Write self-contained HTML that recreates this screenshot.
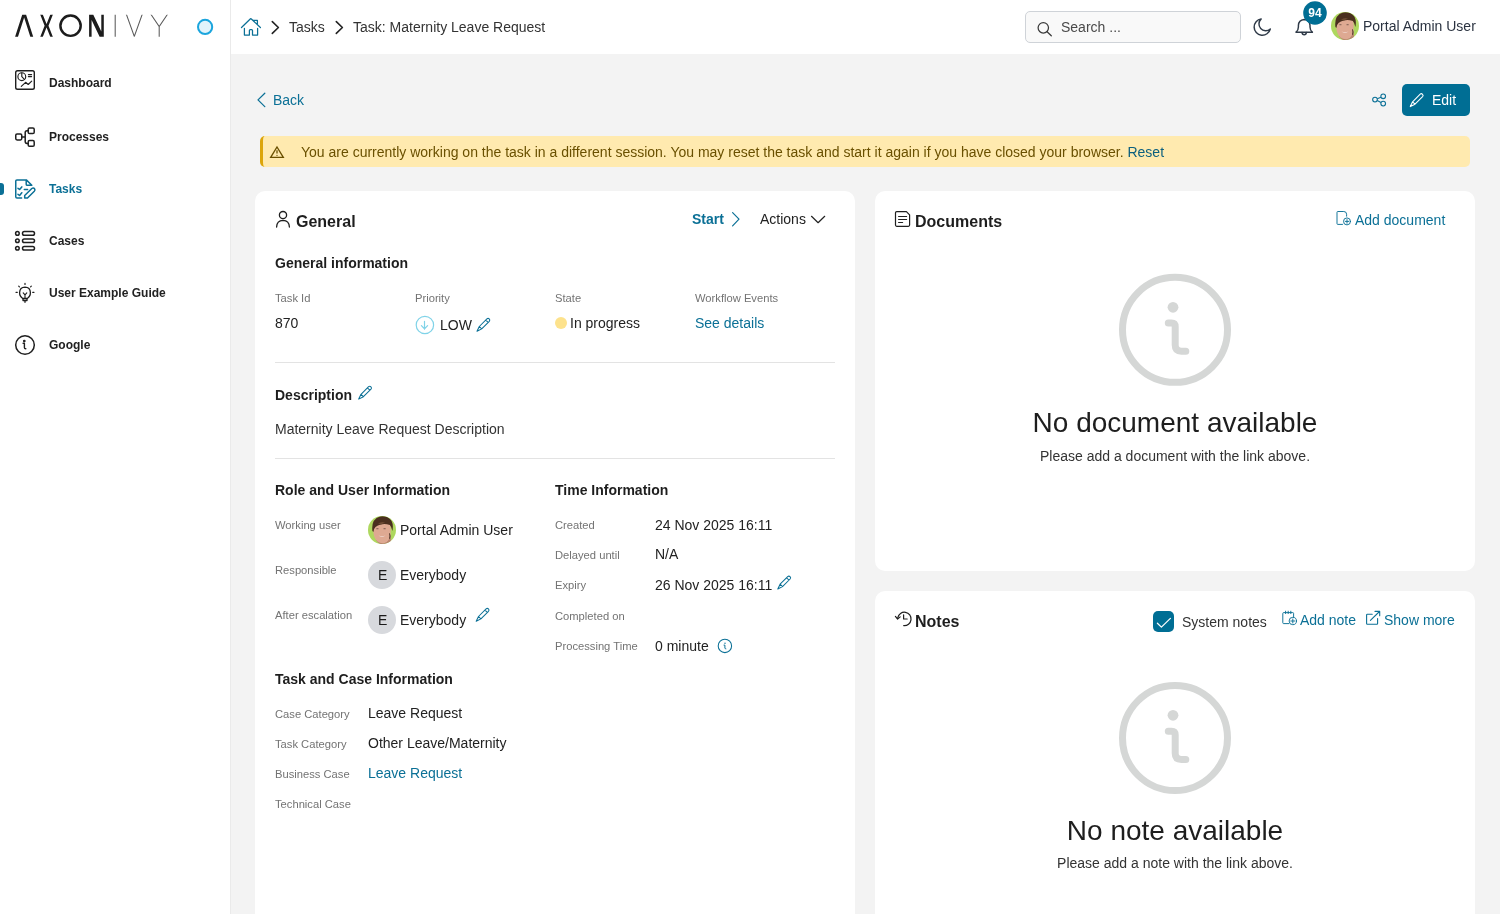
<!DOCTYPE html>
<html><head><meta charset="utf-8">
<style>
*{box-sizing:border-box;margin:0;padding:0}
html,body{width:1500px;height:914px;overflow:hidden;background:#f3f3f3;font-family:"Liberation Sans",sans-serif;color:#222}
.a{position:absolute;white-space:nowrap;line-height:1;will-change:transform}
svg{position:absolute;overflow:visible}
#side{position:absolute;left:0;top:0;width:231px;height:914px;background:#fff;border-right:1px solid #eaeaea}
#top{position:absolute;left:231px;top:0;width:1269px;height:54px;background:#fff}
.nav{font-size:12px;font-weight:bold;color:#222;left:49px}
.t14{font-size:14px}
.b14{font-size:14px;font-weight:bold}
.lbl{font-size:11.2px;color:#737373}
.teal{color:#0b7096}
.card{position:absolute;background:#fff;border-radius:10px}
.hr{position:absolute;height:1px;background:#e3e3e3}
</style></head><body>
<div id="side"></div>
<div id="top"></div>

<!-- logo -->
<svg width="240" height="54" style="left:0;top:0" viewBox="0 0 240 54">
  <clipPath id="lc"><rect x="0" y="14.7" width="240" height="22.1"/></clipPath>
  <g fill="none" stroke="#1c1c1c" stroke-width="2.3" stroke-linejoin="miter" stroke-miterlimit="10" clip-path="url(#lc)">
    
    <path d="M40.5 12 L45.9 25.75 L40.5 39.5 M52.6 12 L47.2 25.75 L52.6 39.5" stroke-linejoin="round" stroke-width="2.4"/>
    
    
  </g>
  <polygon fill="#1c1c1c" points="15.1,36.8 22.2,14.7 26.1,14.7 33.2,36.8 30.3,36.8 24.15,17.6 18,36.8"/>
  <polygon fill="#1c1c1c" points="89.1,14.7 93.3,14.7 101.3,31.4 101.3,14.7 103.8,14.7 103.8,36.8 99.6,36.8 91.6,20.1 91.6,36.8 89.1,36.8"/>
  <g fill="none" stroke="#5a5a5a" stroke-width="1.05" clip-path="url(#lc)">
    <path d="M115.2 14 V37"/>
    <path d="M125.9 13 L134.3 36.4 L142.7 13"/>
    <path d="M150.7 14 L159.2 26.6 L167.7 14 M159.2 26.6 V37"/>
  </g>
  <ellipse cx="70.55" cy="25.7" rx="10.15" ry="10.15" fill="none" stroke="#1c1c1c" stroke-width="2.45"/>
  <circle cx="205.1" cy="26.9" r="7.1" fill="#e3f4fb" stroke="#1ba5dd" stroke-width="2"/>
</svg>

<!-- sidebar nav -->
<div class="a nav" style="top:76.5px">Dashboard</div>
<div class="a nav" style="top:130.6px">Processes</div>
<div class="a nav" style="top:182.8px;color:#0b7096">Tasks</div>
<div class="a nav" style="top:234.8px">Cases</div>
<div class="a nav" style="top:286.9px">User Example Guide</div>
<div class="a nav" style="top:338.6px">Google</div>
<div style="position:absolute;left:0;top:183px;width:4px;height:12px;background:#0b7096;border-radius:0 3px 3px 0"></div>

<!-- breadcrumb -->
<div class="a t14" style="left:288.6px;top:20.2px;color:#333">Tasks</div>
<div class="a t14" style="left:352.5px;top:20.2px;color:#333">Task: Maternity Leave Request</div>

<!-- search -->
<div style="position:absolute;left:1025px;top:11px;width:216px;height:32px;border:1px solid #cfd3d8;border-radius:5px;background:#f9f9f9"></div>
<div class="a t14" style="left:1060.7px;top:19.7px;color:#4a4a4a">Search ...</div>
<div class="a t14" style="left:1363.2px;top:19.2px;color:#2b3341">Portal Admin User</div>

<!-- back / edit -->
<div class="a t14 teal" style="left:272.5px;top:93.2px">Back</div>
<div style="position:absolute;left:1402px;top:84px;width:68px;height:32px;background:#006e94;border-radius:5px"></div>
<div class="a t14" style="left:1431.5px;top:93.4px;color:#fff">Edit</div>

<!-- alert -->
<div style="position:absolute;left:260px;top:136px;width:1210px;height:31px;background:#ffeaaf;border-left:3px solid #dca50a;border-radius:5px"></div>
<div class="a t14" style="left:300.8px;top:145.2px;color:#6a5000">You are currently working on the task in a different session. You may reset the task and start it again if you have closed your browser. <span style="color:#0b5f7e">Reset</span></div>

<!-- cards -->
<div class="card" style="left:255px;top:191px;width:600px;height:760px"></div>
<div class="card" style="left:875px;top:191px;width:600px;height:380px"></div>
<div class="card" style="left:875px;top:591px;width:600px;height:400px"></div>



<!-- GENERAL CARD CONTENT -->
<div class="a" style="left:296px;top:213.5px;font-size:16px;font-weight:bold;color:#1e1e1e">General</div>
<div class="a b14 teal" style="left:691.8px;top:212px">Start</div>
<div class="a t14" style="left:760px;top:212px;color:#222">Actions</div>
<div class="a b14" style="left:275px;top:256.3px;color:#1e1e1e">General information</div>
<div class="a lbl" style="left:275px;top:292.9px">Task Id</div>
<div class="a lbl" style="left:415px;top:292.9px">Priority</div>
<div class="a lbl" style="left:555px;top:292.9px">State</div>
<div class="a lbl" style="left:695px;top:292.9px">Workflow Events</div>
<div class="a t14" style="left:275px;top:316.2px;color:#222">870</div>
<div class="a t14" style="left:439.5px;top:318.2px;color:#222">LOW</div>
<div style="position:absolute;left:555px;top:317px;width:12px;height:12px;border-radius:50%;background:#fde28c"></div>
<div class="a t14" style="left:569.6px;top:316.2px;color:#222">In progress</div>
<div class="a t14 teal" style="left:695px;top:316.2px">See details</div>
<div class="hr" style="left:275px;top:362px;width:560px"></div>
<div class="a b14" style="left:275px;top:387.9px;color:#1e1e1e">Description</div>
<div class="a t14" style="left:275px;top:422.4px;color:#333">Maternity Leave Request Description</div>
<div class="hr" style="left:275px;top:458px;width:560px"></div>

<div class="a b14" style="left:275px;top:483.2px;color:#1e1e1e">Role and User Information</div>
<div class="a lbl" style="left:275px;top:520px">Working user</div>
<div class="a lbl" style="left:275px;top:565px">Responsible</div>
<div class="a lbl" style="left:275px;top:610px">After escalation</div>
<div class="a t14" style="left:400.4px;top:523.3px;color:#222">Portal Admin User</div>
<div class="a t14" style="left:400.4px;top:568.3px;color:#222">Everybody</div>
<div class="a t14" style="left:400.4px;top:613.3px;color:#222">Everybody</div>
<div style="position:absolute;left:368px;top:561px;width:28px;height:28px;border-radius:50%;background:#d7d9dd"></div>
<div style="position:absolute;left:368px;top:606px;width:28px;height:28px;border-radius:50%;background:#d7d9dd"></div>
<div class="a t14" style="left:378px;top:567.5px;color:#1a1a1a">E</div>
<div class="a t14" style="left:378px;top:612.5px;color:#1a1a1a">E</div>

<div class="a b14" style="left:555px;top:483.4px;color:#1e1e1e">Time Information</div>
<div class="a lbl" style="left:555px;top:520px">Created</div>
<div class="a lbl" style="left:555px;top:550px">Delayed until</div>
<div class="a lbl" style="left:555px;top:580.3px">Expiry</div>
<div class="a lbl" style="left:555px;top:610.7px">Completed on</div>
<div class="a lbl" style="left:555px;top:641px">Processing Time</div>
<div class="a t14" style="left:655px;top:517.5px;color:#222">24 Nov 2025 16:11</div>
<div class="a t14" style="left:655px;top:547.4px;color:#222">N/A</div>
<div class="a t14" style="left:655px;top:577.8px;color:#222">26 Nov 2025 16:11</div>
<div class="a t14" style="left:655px;top:638.5px;color:#222">0 minute</div>

<div class="a b14" style="left:275px;top:672.4px;color:#1e1e1e">Task and Case Information</div>
<div class="a lbl" style="left:275px;top:709px">Case Category</div>
<div class="a lbl" style="left:275px;top:739px">Task Category</div>
<div class="a lbl" style="left:275px;top:769px">Business Case</div>
<div class="a lbl" style="left:275px;top:799px">Technical Case</div>
<div class="a t14" style="left:368px;top:706.2px;color:#222">Leave Request</div>
<div class="a t14" style="left:368px;top:736.2px;color:#222">Other Leave/Maternity</div>
<div class="a t14 teal" style="left:368px;top:766.2px">Leave Request</div>

<!-- DOCUMENTS -->
<div class="a" style="left:915.2px;top:213.9px;font-size:16px;font-weight:bold;color:#1e1e1e">Documents</div>
<div class="a t14 teal" style="left:1355px;top:212.9px">Add document</div>
<div class="a" style="left:1175px;top:409.3px;font-size:28px;color:#1e1e1e;transform:translateX(-50%)">No document available</div>
<div class="a t14" style="left:1175px;top:448.7px;color:#333;transform:translateX(-50%)">Please add a document with the link above.</div>

<!-- NOTES -->
<div class="a" style="left:915.2px;top:614.1px;font-size:16px;font-weight:bold;color:#1e1e1e">Notes</div>
<div style="position:absolute;left:1153px;top:611px;width:21px;height:21px;border-radius:5px;background:#006e94"></div>
<div class="a t14" style="left:1182.3px;top:615.3px;color:#333">System notes</div>
<div class="a t14 teal" style="left:1300.2px;top:612.5px">Add note</div>
<div class="a t14 teal" style="left:1384.2px;top:612.5px">Show more</div>
<div class="a" style="left:1175px;top:817.3px;font-size:28px;color:#1e1e1e;transform:translateX(-50%)">No note available</div>
<div class="a t14" style="left:1175px;top:856.2px;color:#333;transform:translateX(-50%)">Please add a note with the link above.</div>

<!-- ICONS OVERLAY -->
<svg width="1500" height="914" style="left:0;top:0;z-index:5" viewBox="0 0 1500 914">
 <g fill="none" stroke="#1f1f1f" stroke-width="1.5" stroke-linecap="round" stroke-linejoin="round">
  <!-- dashboard -->
  <rect x="15.7" y="70.7" width="18.6" height="18.6" rx="1.8" stroke-width="1.4"/>
  <circle cx="21.8" cy="76.7" r="3.9" stroke-width="1.15"/>
  <path d="M21.8 73 V76.7 L24.4 79.3" stroke-width="1.15"/>
  <path d="M28.4 74.6 H31.6 M28.4 76.6 H31.6" stroke-width="1.15"/>
  <path d="M21.3 86.4 L25.6 82.3 L28.2 84.5 L31.7 81.1" stroke-width="1.15"/>
  <!-- processes -->
  <rect x="15.75" y="133.9" width="6" height="6" rx="1.3"/>
  <rect x="28.2" y="128" width="6" height="5.6" rx="1.3"/>
  <rect x="28.2" y="140.6" width="6" height="5.6" rx="1.3"/>
  <path d="M21.8 136.9 H25.2 M28.2 130.8 H27 Q25.2 130.8 25.2 132.6 V141.6 Q25.2 143.4 27 143.4 H28.2"/>
  <!-- cases -->
  <circle cx="17.4" cy="233.4" r="1.8"/><circle cx="17.4" cy="240.8" r="1.8"/><circle cx="17.4" cy="248.3" r="1.8"/>
  <rect x="22.5" y="231.6" width="12" height="3.6" rx="1.8"/>
  <rect x="22.5" y="239" width="12" height="3.6" rx="1.8"/>
  <rect x="22.5" y="246.5" width="12" height="3.6" rx="1.8"/>
  <!-- bulb -->
  <path d="M22.8 298.5 Q19.5 296.5 19.6 292.6 Q19.8 287.3 25 287.2 Q30.2 287.3 30.4 292.6 Q30.5 296.5 27.2 298.5 Z" stroke-width="1.3"/>
  <path d="M23 298.6 V300.5 H27 V298.6 M25 300.5 V302.3" stroke-width="1.3"/>
  <path d="M23.2 292.8 L25 294.8 L26.8 292.8 M25 294.8 V298" stroke-width="1.1"/>
  <path d="M25 283.3 V284.5 M16 292.3 H17.3 M32.7 292.3 H34 M18.7 286.1 L19.4 286.8 M31.3 286.1 L30.6 286.8" stroke-width="1.2"/>
  <!-- google info -->
  <circle cx="25" cy="345" r="9.3"/>
  <circle cx="24.3" cy="341" r="0.6" fill="#1f1f1f"/>
  <path d="M23.1 343.3 H24.4 V347.6 Q24.4 348.8 25.8 348.8" stroke-width="1.4"/>
 </g>
 <!-- tasks (teal) -->
 <g fill="none" stroke="#0b7096" stroke-width="1.5" stroke-linecap="round" stroke-linejoin="round">
  <path d="M21.6 198.1 H17 Q15.75 198.1 15.75 196.8 V180.9 Q15.75 179.9 16.9 179.9 H26.3 L31.8 185.3 H27.3 Q26.2 185.3 26.2 184.2 V180.2"/>
  <path d="M18 188.3 L19.6 189.5 L21.8 186.9 M18 194.3 L19.6 195.5 L21.8 192.7 M24.3 189.4 H27.6"/>
  <path d="M24.7 198 V195.5 L31.8 188.5 Q33.3 187.4 34.5 188.6 Q35.5 190 34.3 191.3 L27.5 198 Z"/>
 </g>
 <!-- breadcrumb -->
 <g fill="none" stroke="#0b7096" stroke-width="1.25" stroke-linecap="round" stroke-linejoin="round">
  <path d="M241.5 27.5 L250.5 18.8 Q250.8 18.5 251.1 18.8 L260.4 27.5 M253.3 20.3 H257.4 V24"/>
  <path d="M244.4 28.3 V35 H249.4 V30.5 Q249.4 29.6 250.3 29.6 H251.6 Q252.5 29.6 252.5 30.5 V35 H257.6 V28.3"/>
 </g>
 <g fill="none" stroke="#222" stroke-width="1.6" stroke-linecap="round" stroke-linejoin="round">
  <path d="M272.3 21.6 L278.4 27.5 L272.3 33.4"/>
  <path d="M336.3 21.6 L342.4 27.5 L336.3 33.4"/>
 </g>
 <!-- search -->
 <g fill="none" stroke="#3a3a3a" stroke-width="1.25" stroke-linecap="round">
  <circle cx="1043.3" cy="27.8" r="5.2"/>
  <path d="M1047.1 31.7 L1051.3 35.8"/>
 </g>
 <!-- moon -->
 <path d="M1261.2 18.9 A8.2 8.2 0 1 0 1270.3 29 A6.6 6.6 0 0 1 1261.2 18.9 Z" fill="none" stroke="#2f3a48" stroke-width="1.45" stroke-linejoin="round"/>
 <!-- bell -->
 <g fill="none" stroke="#2f3a48" stroke-width="1.45" stroke-linecap="round" stroke-linejoin="round">
  <path d="M1296 32.2 Q1298.4 30.4 1298.4 27 V25.5 Q1298.6 20 1304.2 19.5 Q1309.8 20 1310 25.5 V27 Q1310 30.4 1312.4 32.2 Z"/>
  <path d="M1302 32.4 Q1302.2 34.8 1304.2 34.8 Q1306.2 34.8 1306.4 32.4"/>
 </g>
 <circle cx="1315" cy="13" r="11.8" fill="#006e94"/>
 <!-- back chevron -->
 <path d="M264.8 93.2 L258 99.9 L264.8 106.6" fill="none" stroke="#0b7096" stroke-width="1.3" stroke-linecap="round" stroke-linejoin="round"/>
 <!-- share -->
 <g fill="none" stroke="#0b7096" stroke-width="1.1">
  <circle cx="1375" cy="99.6" r="2.35"/><circle cx="1383.2" cy="96.3" r="2.35"/><circle cx="1383.2" cy="103.6" r="2.35"/>
  <path d="M1377.2 98.7 L1381 97.2 M1377.2 100.6 L1381 102.6"/>
 </g>
 <!-- edit pencil white -->
 <g fill="none" stroke="#fff" stroke-width="1.1" stroke-linejoin="round">
  <path transform="translate(1409.8 93.3)" d="M0.5 13.3 L2.8 8.5 L10.4 0.9 A1.7 1.7 0 0 1 12.8 3.3 L5.2 10.9 Z M2.8 8.5 L5.2 10.9"/>
 </g>
 <!-- warning -->
 <g fill="none" stroke="#6a5000" stroke-width="1.35" stroke-linejoin="miter">
  <path d="M277 147 L283.3 157.3 H270.7 Z"/>
  <path d="M277 150.2 V153.6" stroke-width="1.3"/>
 </g>
 <circle cx="277" cy="155.3" r="0.65" fill="#6a5000"/>

 <!-- card icons -->
 <g fill="none" stroke="#1f1f1f" stroke-width="1.3" stroke-linecap="round">
  <circle cx="283" cy="215.1" r="3.6"/>
  <path d="M276.6 227 Q276.8 220.5 283 220.3 Q289.2 220.5 289.4 227"/>
 </g>
 <g fill="none" stroke="#0b7096" stroke-width="1.2" stroke-linecap="round" stroke-linejoin="round">
  <path d="M732.6 212.6 L739 219.2 L732.6 225.8"/>
 </g>
 <g fill="none" stroke="#222" stroke-width="1.2" stroke-linecap="round" stroke-linejoin="round">
  <path d="M811.5 216.3 L818.1 222.7 L824.7 216.3"/>
 </g>
 <!-- priority low icon -->
 <g fill="none" stroke="#80d3e8" stroke-width="1.2" stroke-linecap="round" stroke-linejoin="round">
  <circle cx="424.9" cy="325" r="8.7"/>
  <path d="M424.5 321.3 V329.2 M421.4 325.6 L424.5 328.9 L427.6 325.6"/>
 </g>
 <!-- teal pencils -->
 <g fill="none" stroke="#0b7096" stroke-width="1.05" stroke-linejoin="round">
  <path transform="translate(476.5 318)" d="M0.5 13.3 L2.8 8.5 L10.4 0.9 A1.7 1.7 0 0 1 12.8 3.3 L5.2 10.9 Z M2.8 8.5 L5.2 10.9 M9.25 2.05 L11.65 4.45"/>
  <path transform="translate(358.2 385.8)" d="M0.5 13.3 L2.8 8.5 L10.4 0.9 A1.7 1.7 0 0 1 12.8 3.3 L5.2 10.9 Z M2.8 8.5 L5.2 10.9 M9.25 2.05 L11.65 4.45"/>
  <path transform="translate(475.7 608)" d="M0.5 13.3 L2.8 8.5 L10.4 0.9 A1.7 1.7 0 0 1 12.8 3.3 L5.2 10.9 Z M2.8 8.5 L5.2 10.9 M9.25 2.05 L11.65 4.45"/>
  <path transform="translate(777.3 575.7)" d="M0.5 13.3 L2.8 8.5 L10.4 0.9 A1.7 1.7 0 0 1 12.8 3.3 L5.2 10.9 Z M2.8 8.5 L5.2 10.9 M9.25 2.05 L11.65 4.45"/>
 </g>
 <!-- processing info -->
 <g fill="none" stroke="#0b7096" stroke-width="1.05" stroke-linecap="round">
  <circle cx="724.9" cy="645.9" r="6.7"/>
  <path d="M724 645.1 H724.9 V648.1 Q724.9 648.9 725.9 648.9" stroke-width="1.0"/>
 </g>
 <circle cx="725" cy="643.2" r="0.7" fill="#0b7096"/>
 <!-- documents icon -->
 <g fill="none" stroke="#1f1f1f" stroke-width="1.2" stroke-linejoin="round" stroke-linecap="round">
  <path d="M896.7 211.6 H906.4 L909.6 214.8 V225.1 Q909.6 226.3 908.4 226.3 H896.7 Q895.5 226.3 895.5 225.1 V212.8 Q895.5 211.6 896.7 211.6 Z"/>
  <path d="M898.6 216.5 H906.6 M898.6 219.5 H906.6 M898.6 222.5 H902.6"/>
 </g>
 <!-- add document icon -->
 <g fill="none" stroke="#0b7096" stroke-width="0.95" stroke-linejoin="round" stroke-linecap="round">
  <path d="M1342.5 224.4 H1337.8 Q1337 224.4 1337 223.6 V212.3 Q1337 211.5 1337.8 211.5 H1343.8 Q1346.5 211.5 1346.6 214.2 V216.2"/>
  <circle cx="1347" cy="221.4" r="3.5"/>
  <path d="M1347 219.6 V223.2 M1345.2 221.4 H1348.8"/>
 </g>
 <!-- history icon -->
 <g fill="none" stroke="#1f1f1f" stroke-width="1.2" stroke-linecap="round" stroke-linejoin="round">
  <path d="M897.8 617.6 A6.7 6.7 0 1 1 903.7 625.6"/>
  <path d="M895.4 616.4 L897.6 619 L900.2 616.9"/>
  <path d="M903.6 614.8 V619 H907.2"/>
 </g>
 <!-- checkbox tick -->
 <path d="M1157.4 623.2 L1161.4 627.1 L1170.4 618.4" fill="none" stroke="#fff" stroke-width="1.25" stroke-linecap="round" stroke-linejoin="round"/>
 <!-- add note icon -->
 <g fill="none" stroke="#0b7096" stroke-width="0.95" stroke-linejoin="round" stroke-linecap="round">
  <path d="M1288.7 623.6 H1283.6 Q1282.8 623.6 1282.8 622.8 V613.4 Q1282.8 612.6 1283.6 612.6 H1292.8 Q1293.6 612.6 1293.6 613.4 V617"/>
  <path d="M1285.6 611.2 V613.6 M1288.2 611.2 V613.6 M1290.8 611.2 V613.6"/>
  <circle cx="1292.8" cy="621" r="3.7"/>
  <path d="M1292.8 619 V623 M1290.8 621 H1294.8"/>
 </g>
 <!-- show more -->
 <g fill="none" stroke="#0b7096" stroke-width="1.1" stroke-linejoin="round" stroke-linecap="round">
  <path d="M1372.2 614.3 H1367.3 Q1366.6 614.3 1366.6 615 V623.6 Q1366.6 624.3 1367.3 624.3 H1376.9 Q1377.6 624.3 1377.6 623.6 V618.6"/>
  <path d="M1370.4 620.4 L1379.5 611.5 M1375 611.4 H1379.7 V615.8"/>
 </g>
 <!-- big info circles -->
 <g fill="none" stroke="#d5d7d6" stroke-width="7" stroke-linecap="round" stroke-linejoin="round">
  <circle cx="1175" cy="329.8" r="52.5"/>
  <path d="M1168.3 323.1 H1171.5 Q1175.2 323.1 1175.2 326.8 V345 Q1175.2 351.2 1181.4 351.2 H1185.8"/>
  <circle cx="1175" cy="738" r="52.5"/>
  <path d="M1168.3 731.3 H1171.5 Q1175.2 731.3 1175.2 735 V753.2 Q1175.2 759.4 1181.4 759.4 H1185.8"/>
 </g>
 <circle cx="1173" cy="307.3" r="5.4" fill="#d5d7d6"/>
 <circle cx="1173" cy="715.3" r="5.4" fill="#d5d7d6"/>

 <g transform="translate(1345 26)">
  <clipPath id="av1"><circle cx="0" cy="0" r="14"/></clipPath>
  <g clip-path="url(#av1)">
   <rect x="-15" y="-15" width="30" height="30" fill="#aed85f"/>
   <path d="M-6 10 Q-3 15 2 15 L9 15 Q9 9 8.6 4 Z" fill="#b98570"/>
   <path d="M-8.8 -3 Q-9.2 8 -4.5 11.5 Q-1 14 2.5 13 Q7.5 11.5 8.6 4 Q9 -1 8.4 -4 Q8 -9 0 -9.5 Q-8.5 -9 -8.8 -3 Z" fill="#dea992"/>
   <path d="M-9.6 1 Q-11 -11 -2 -13.6 Q6 -15 9.6 -9 Q11.6 -5 10.4 1 Q9.4 -3.5 7.8 -5 Q3 -6.5 -1 -5.5 Q-4.5 -5 -6.5 -3 Q-8.2 -1.5 -8.6 2 Z" fill="#4a2f1f"/>
   <path d="M-4 -6 Q-1 -9 3 -7.5 Q1 -6.5 -1 -5.4 Z" fill="#6b4a33"/>
   <path d="M7.8 3 Q9 6 8 9 L7.2 8.5 Q7.8 6 7.2 3.5 Z" fill="#3a2418"/>
   <path d="M-3.6 5.6 Q0 8.4 3.6 5.6 Q0 7 -3.6 5.6 Z" fill="#f2dcd4"/>
   <ellipse cx="-4.6" cy="-1.3" rx="1.3" ry="0.6" fill="#8d6a5c"/>
   <ellipse cx="2.6" cy="-1.3" rx="1.3" ry="0.6" fill="#8d6a5c"/>
  </g>
 </g>
 <g transform="translate(382 530)">
  <clipPath id="av2"><circle cx="0" cy="0" r="14"/></clipPath>
  <g clip-path="url(#av2)">
   <rect x="-15" y="-15" width="30" height="30" fill="#aed85f"/>
   <path d="M-6 10 Q-3 15 2 15 L9 15 Q9 9 8.6 4 Z" fill="#b98570"/>
   <path d="M-8.8 -3 Q-9.2 8 -4.5 11.5 Q-1 14 2.5 13 Q7.5 11.5 8.6 4 Q9 -1 8.4 -4 Q8 -9 0 -9.5 Q-8.5 -9 -8.8 -3 Z" fill="#dea992"/>
   <path d="M-9.6 1 Q-11 -11 -2 -13.6 Q6 -15 9.6 -9 Q11.6 -5 10.4 1 Q9.4 -3.5 7.8 -5 Q3 -6.5 -1 -5.5 Q-4.5 -5 -6.5 -3 Q-8.2 -1.5 -8.6 2 Z" fill="#4a2f1f"/>
   <path d="M-4 -6 Q-1 -9 3 -7.5 Q1 -6.5 -1 -5.4 Z" fill="#6b4a33"/>
   <path d="M7.8 3 Q9 6 8 9 L7.2 8.5 Q7.8 6 7.2 3.5 Z" fill="#3a2418"/>
   <path d="M-3.6 5.6 Q0 8.4 3.6 5.6 Q0 7 -3.6 5.6 Z" fill="#f2dcd4"/>
   <ellipse cx="-4.6" cy="-1.3" rx="1.3" ry="0.6" fill="#8d6a5c"/>
   <ellipse cx="2.6" cy="-1.3" rx="1.3" ry="0.6" fill="#8d6a5c"/>
  </g>
 </g>
</svg>

<div class="a" style="left:1315px;top:6.6px;font-size:12px;font-weight:bold;color:#fff;transform:translateX(-50%);z-index:6">94</div>
</body></html>
